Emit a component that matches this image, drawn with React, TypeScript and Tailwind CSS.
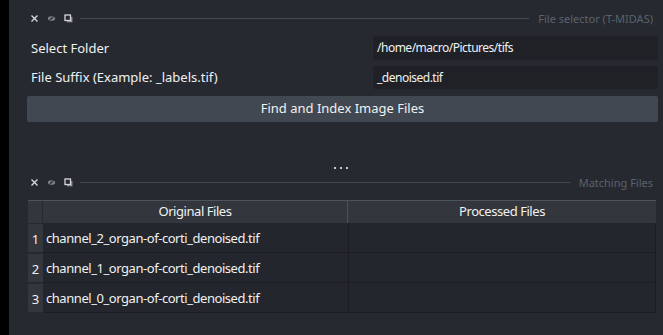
import React from "react";

function TitleIcons() {
  return (
    <div className="flex items-center gap-[8px] pl-[21px]">
      <svg width="9" height="9" viewBox="0 0 9 9" className="block">
        <path d="M1.5 1.5 L7.5 7.5 M7.5 1.5 L1.5 7.5" stroke="#d6d7d9" strokeWidth="1.4" />
      </svg>
      <svg width="9" height="9" viewBox="0 0 9 9" className="block">
        <ellipse cx="4.5" cy="4.5" rx="3.6" ry="2.3" fill="#7d8187" />
        <circle cx="4.5" cy="4.5" r="1.1" fill="#3a3d44" />
        <path d="M1.5 7 L7.5 2" stroke="#262930" strokeWidth="0.9" />
      </svg>
      <svg width="9" height="9" viewBox="0 0 9 9" className="block">
        <rect x="1" y="1" width="5.5" height="5.5" fill="none" stroke="#d6d7d9" strokeWidth="1.3" />
        <path d="M3 7.8 H7.8 V3" fill="none" stroke="#a8abb0" strokeWidth="1.1" />
      </svg>
    </div>
  );
}

function TitleBar({ title }: { title: string }) {
  return (
    <div className="flex h-5 items-center pr-[10px]">
      <TitleIcons />
      <div className="ml-[7px] mr-[9px] h-px flex-1 bg-[#454a52]" />
      <span className="whitespace-nowrap text-[11px] leading-none text-[#5a626c]">{title}</span>
    </div>
  );
}

export default function App() {
  const rows = [
    "channel_2_organ-of-corti_denoised.tif",
    "channel_1_organ-of-corti_denoised.tif",
    "channel_0_organ-of-corti_denoised.tif",
  ];
  return (
    <div
      className="flex h-[335px] w-[663px] overflow-hidden bg-[#262930] text-[#f0f1f2]"
      style={{ fontFamily: '"Noto Sans", "Open Sans", sans-serif' }}
    >
      <div className="w-[9px] shrink-0 bg-black" />
      <div className="flex flex-1 flex-col">
        {/* Panel 1 */}
        <div className="pt-[8px]">
          <TitleBar title="File selector (T-MIDAS)" />
          <div className="flex flex-col pl-[18px] pr-[5px] pt-[8px]">
            <div className="flex h-[24px] items-center">
              <span className="w-[346px] whitespace-nowrap pl-[4px] pt-[1px] text-[13px]">Select Folder</span>
              <div className="flex h-full flex-1 items-center rounded-[2px] bg-[#1f2127] pl-[4px] text-[12px] tracking-[-0.5px]">
                /home/macro/Pictures/tifs
              </div>
            </div>
            <div className="mt-[6px] flex h-[23px] items-center">
              <span className="w-[346px] whitespace-nowrap pl-[4px] pt-[1px] text-[13px]">File Suffix (Example: _labels.tif)</span>
              <div className="flex h-full flex-1 items-center rounded-[2px] bg-[#1f2127] pl-[4px] text-[12px] tracking-[-0.5px]">
                _denoised.tif
              </div>
            </div>
            <button className="mt-[7px] flex h-[26px] items-center justify-center rounded-[2px] bg-[#414851] text-[13px] text-[#f0f1f2]">
              Find and Index Image Files
            </button>
          </div>
        </div>
        {/* Splitter */}
        <div className="mt-[41px] flex h-[9px] items-center justify-center gap-[4px] pl-[10px]">
          <div className="h-[2px] w-[2px] bg-[#c8cacd]" />
          <div className="h-[2px] w-[2px] bg-[#c8cacd]" />
          <div className="h-[2px] w-[2px] bg-[#c8cacd]" />
        </div>
        {/* Panel 2 */}
        <TitleBar title="Matching Files" />
        <div className="ml-[19px] mr-[7px] mt-[8px]">
          <div className="flex h-[23px] border-t border-[#4d535b] bg-[#33363d]">
            <div className="w-[15px] border-r border-[#262930]" />
            <div className="flex w-[305px] items-center justify-center border-r border-[#4d535b] text-[13px] tracking-[-0.45px]">
              Original Files
            </div>
            <div className="flex flex-1 items-center justify-center text-[13px] tracking-[-0.45px]">Processed Files</div>
          </div>
          <div className="flex flex-col">
            {rows.map((r, i) => (
              <div key={i} className="flex h-[30px]">
                <div className="flex w-[15px] items-center justify-center border-y border-[#262930] bg-[#33363d] pt-[4px] text-[13px]">
                  {i + 1}
                </div>
                <div className="flex w-[306px] items-center border-b border-r border-[#1c1e23] bg-[#23262c] pl-[3px] pt-[3px] text-[13px] tracking-[-0.45px]">
                  {r}
                </div>
                <div className="flex-1 border-b border-r border-[#1c1e23] bg-[#23262c]" />
              </div>
            ))}
          </div>
        </div>
      </div>
    </div>
  );
}
